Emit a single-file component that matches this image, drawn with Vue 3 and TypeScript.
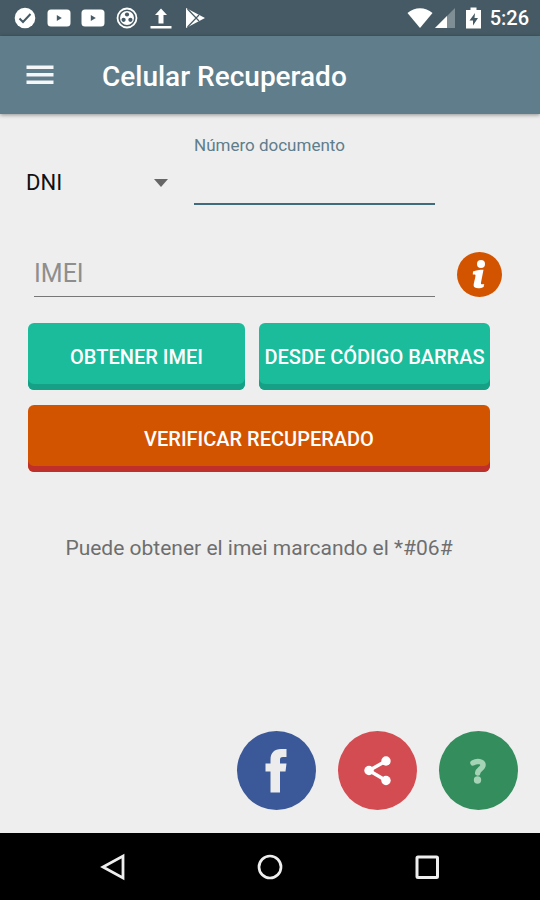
<script setup lang="ts">
import { ref } from 'vue'

const documentType = ref('DNI')
const documentNumber = ref('')
const imei = ref('')
</script>

<template>
  <div class="screen">
    <div class="status-bar">
      <div class="status-icons">
        <svg class="status-icon" viewBox="0 0 22 22" aria-hidden="true">
          <circle cx="11" cy="11" r="10.300" fill="#fff" />
          <path d="M5.500 11.500l3.500 3.500 7.500-8" fill="none" stroke="#455a64" stroke-width="2" />
        </svg>
        <svg v-for="n in 2" :key="n" class="status-icon wide" viewBox="0 0 24 22" aria-hidden="true">
          <rect x="0.500" y="2.500" width="23" height="17" rx="3.500" fill="#fff" />
          <path d="M9.800 8v6l5-3z" fill="#455a64" />
        </svg>
        <svg class="status-icon" viewBox="0 0 22 22" aria-hidden="true">
          <circle cx="11" cy="11" r="9.500" fill="none" stroke="#fff" stroke-width="1.800" />
          <circle cx="11" cy="11" r="7" fill="#fff" />
          <g fill="#455a64">
            <circle cx="11" cy="7.500" r="2.100" />
            <circle cx="7.600" cy="12.800" r="2.100" />
            <circle cx="14.400" cy="12.800" r="2.100" />
          </g>
        </svg>
        <svg class="status-icon" viewBox="0 0 22 22" aria-hidden="true">
          <path d="M11 1.500l6 6.500h-3.500v8.500h-5V8H5z M0.500 19h21v2.500h-21z" fill="#fff" />
        </svg>
        <svg class="status-icon" viewBox="0 0 22 22" aria-hidden="true">
          <path d="M2 1l19 10L2 21z" fill="#fff" />
          <path d="M3.500 2L15 14M3.500 20L15 8" fill="none" stroke="#455a64" stroke-width="1.200" />
        </svg>
      </div>
      <div class="system-icons">
        <svg class="wifi" viewBox="0 0 26 22" aria-hidden="true">
          <path d="M0.500 6C7.500-0.500 18.500-0.500 25.500 6L13 21z" fill="#fff" />
        </svg>
        <svg class="signal" viewBox="0 0 21 22" aria-hidden="true">
          <path d="M21 1v20H1z" fill="#7f8d94" />
          <path d="M13 9v12H1z" fill="#fff" />
        </svg>
        <svg class="battery" viewBox="0 0 15 22" aria-hidden="true">
          <path d="M4.500 0.500h6V3H15v18.500H0V3h4.500z" fill="#fff" />
          <path d="M9 6l-5.500 7.500h3.500v5l5-7.500H8.500z" fill="#455a64" />
        </svg>
        <span class="clock">5:26</span>
      </div>
    </div>

    <header class="app-bar">
      <button type="button" class="menu-button" aria-label="Menú">
        <svg viewBox="0 0 28 20" aria-hidden="true">
          <path d="M0.500 0.500h27v3.500h-27zM0.500 8h27v3.500h-27zM0.500 15.500h27v3.500h-27z" fill="#f4f6f7" />
        </svg>
      </button>
      <h1>Celular Recuperado</h1>
    </header>

    <main>
      <form @submit.prevent>
        <div class="document-row">
          <div class="document-type">
            <select v-model="documentType" aria-label="Tipo de documento">
              <option>DNI</option>
            </select>
            <svg viewBox="0 0 14 8" aria-hidden="true"><path d="M0 0h14L7 8z" fill="#666" /></svg>
          </div>
          <div class="document-number">
            <label for="document-number">Número documento</label>
            <input id="document-number" v-model="documentNumber" type="text" inputmode="numeric" />
          </div>
        </div>

        <div class="imei-row">
          <input v-model="imei" type="text" inputmode="numeric" placeholder="IMEI" aria-label="IMEI" />
          <button type="button" class="info-button" aria-label="Información">
            <svg viewBox="0 0 45 45" aria-hidden="true">
              <circle cx="22.500" cy="22.500" r="22.500" fill="#d35400" />
              <circle cx="24" cy="12" r="4" fill="#fff" />
              <path d="M16 19.500c3-1.200 6-1.700 10.500-1.700l-2.500 12.700c-.3 1.700.2 2.200 3.200 1.600l-.6 3c-3 1.600-10 2.200-10-1.800 0-1.800 1.200-5 1.900-9.300.2-1.300-.6-1.600-2.700-1.400z" fill="#fff" />
            </svg>
          </button>
        </div>

        <div class="actions">
          <button type="button" class="action">OBTENER IMEI</button>
          <button type="button" class="action">DESDE CÓDIGO BARRAS</button>
          <button type="submit" class="action verify">VERIFICAR RECUPERADO</button>
        </div>
      </form>

      <p class="hint">Puede obtener el imei marcando el *#06#</p>

      <div class="round-buttons">
        <button type="button" class="round facebook" aria-label="Facebook">
          <svg viewBox="0 0 79 79" aria-hidden="true">
            <path d="M33.500 61.500V40.500h-5v-8h5v-3.500c0-7.500 4-11 10.500-11h5.500v8h-3.500c-2.500 0-3 1-3 3v3.500h6.500l-1 8h-5.500v21z" fill="#ececec" />
          </svg>
        </button>
        <button type="button" class="round share" aria-label="Compartir">
          <svg viewBox="0 0 79 79" aria-hidden="true">
            <path d="M48 30L31 39.500 48 49.500" fill="none" stroke="#fff" stroke-width="3.500" />
            <g fill="#fff">
              <circle cx="48" cy="30" r="4.700" />
              <circle cx="31" cy="39.500" r="4.700" />
              <circle cx="48" cy="49.500" r="4.700" />
            </g>
          </svg>
        </button>
        <button type="button" class="round help" aria-label="Ayuda">
          <svg viewBox="0 0 79 79" aria-hidden="true">
            <path d="M34 31.800c4-2.200 10-1.600 10 2.200 0 3.800-5 3.800-5.300 8" fill="none" stroke="#a5d3b5" stroke-width="5.500" stroke-linecap="round" />
            <circle cx="38.500" cy="49" r="3.700" fill="#a5d3b5" />
          </svg>
        </button>
      </div>
    </main>

    <nav class="system-nav" aria-label="Sistema">
      <button type="button" aria-label="Atrás">
        <svg viewBox="0 0 28 28" aria-hidden="true"><path d="M24 3v22L4 14z" fill="none" stroke="#eee" stroke-width="2.800" /></svg>
      </button>
      <button type="button" aria-label="Inicio">
        <svg viewBox="0 0 28 28" aria-hidden="true"><circle cx="14" cy="14" r="11" fill="none" stroke="#eee" stroke-width="2.700" /></svg>
      </button>
      <button type="button" aria-label="Recientes">
        <svg viewBox="0 0 28 28" aria-hidden="true"><rect x="4" y="4" width="20.500" height="20.500" rx="1" fill="none" stroke="#eee" stroke-width="3" /></svg>
      </button>
    </nav>
  </div>
</template>

<style>
body {
  margin: 0;
}
</style>

<style scoped>
.screen {
  display: flex;
  flex-direction: column;
  min-height: 100vh;
  background: #eee;
  font-family: Roboto, "Liberation Sans", sans-serif;
}

.screen * {
  box-sizing: border-box;
}

button,
input,
select {
  margin: 0;
  padding: 0;
  border: 0;
  border-radius: 0;
  outline: 0;
  background: none;
  font-family: inherit;
}

svg {
  display: block;
}

.status-bar {
  display: flex;
  align-items: center;
  justify-content: space-between;
  height: 36px;
  padding: 0 11px 0 14px;
  background: #455a64;
}

.status-icons,
.system-icons {
  display: flex;
  align-items: center;
}

.status-icons {
  gap: 12px;
}

.status-icon {
  width: 22px;
  height: 22px;
}

.status-icon.wide {
  width: 24px;
  margin: 0 -1px;
}

.wifi {
  width: 26px;
  height: 22px;
}

.signal {
  width: 21px;
  height: 22px;
  margin-left: 1px;
}

.battery {
  width: 15px;
  height: 22px;
  margin: 0 9px 0 11px;
}

.clock {
  color: #fff;
  font-size: 20px;
  font-weight: 500;
  line-height: 24px;
}

.app-bar {
  display: flex;
  align-items: center;
  gap: 48px;
  height: 78px;
  padding: 0 26px;
  background: #607d8b;
  box-shadow: 0 1px 4px rgba(0, 0, 0, 0.4);
}

.menu-button {
  width: 28px;
}

.menu-button svg {
  width: 28px;
  height: 20px;
}

h1 {
  margin: 0;
  padding-top: 4px;
  color: #fff;
  font-size: 28px;
  font-weight: 500;
  line-height: 32px;
}

main {
  display: flex;
  flex: 1;
  flex-direction: column;
  padding: 20px 22px 23px 26px;
}

.document-row {
  display: grid;
  grid-template-columns: 142px 1fr;
  gap: 26px;
  align-items: center;
  padding-right: 83px;
}

.document-type {
  display: flex;
  align-items: center;
  padding-top: 26px;
}

.document-type select {
  flex: 1;
  height: 34px;
  appearance: none;
  color: #111;
  font-size: 22px;
}

.document-type svg {
  width: 14px;
  height: 8px;
}

.document-number {
  display: flex;
  flex-direction: column;
}

.document-number label {
  color: #607d8b;
  font-size: 17px;
  line-height: 22px;
}

.document-number input {
  width: 100%;
  height: 49px;
  border-bottom: 2px solid #3f6b7d;
  color: #111;
  font-size: 24px;
}

.imei-row {
  display: flex;
  align-items: center;
  gap: 22px;
  margin-top: 46px;
  padding: 0 16px 0 8px;
}

.imei-row input {
  flex: 1;
  min-width: 0;
  height: 46px;
  border-bottom: 1px solid #777;
  color: #111;
  font-size: 25px;
}

.imei-row input::placeholder {
  color: #8e8e8e;
  opacity: 1;
}

.info-button,
.info-button svg {
  width: 45px;
  height: 45px;
}

.actions {
  display: grid;
  grid-template-columns: 217fr 231fr;
  gap: 15px 14px;
  margin-top: 26px;
  padding: 0 28px 0 2px;
}

.action {
  height: 67px;
  border-radius: 6px;
  background: #1abc9c;
  box-shadow: inset 0 -6px #16a085;
  color: #fff;
  font-size: 20px;
  font-weight: 500;
  line-height: 24px;
  white-space: nowrap;
}

.action.verify {
  grid-column: 1 / -1;
  background: #d35400;
  box-shadow: inset 0 -6px #c0302b;
}

.hint {
  margin: 62px 0 0;
  padding-right: 26px;
  color: #6e6e6e;
  font-size: 21px;
  line-height: 28px;
  text-align: center;
}

.round-buttons {
  display: flex;
  justify-content: flex-end;
  gap: 22px;
  margin-top: auto;
}

.round {
  width: 79px;
  height: 79px;
  border-radius: 50%;
}

.round svg {
  width: 79px;
  height: 79px;
}

.facebook {
  background: #3b5998;
}

.share {
  background: #d34c52;
}

.help {
  background: #338d5c;
}

.system-nav {
  display: flex;
  align-items: center;
  justify-content: center;
  gap: 129px;
  height: 67px;
  background: #000;
}

.system-nav svg {
  width: 28px;
  height: 28px;
}
</style>
